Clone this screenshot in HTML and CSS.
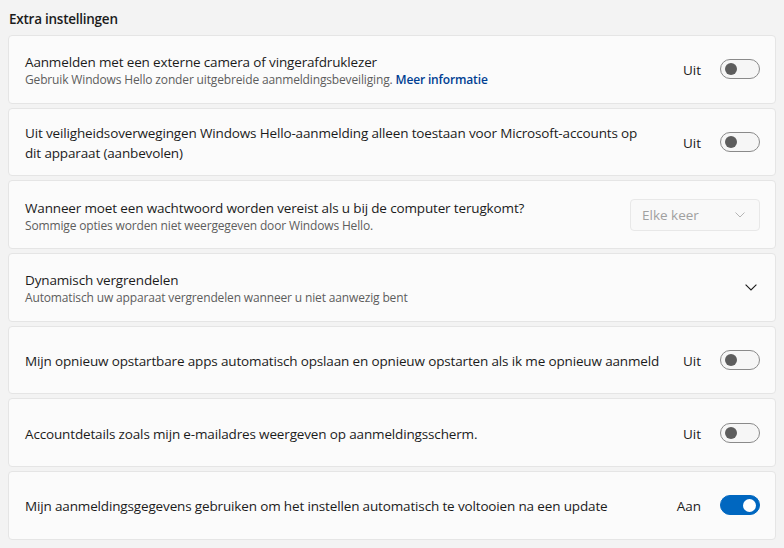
FILE: index.html
```html
<!DOCTYPE html>
<html lang="nl">
<head>
<meta charset="utf-8">
<link rel="stylesheet" href="styles.css">
</head>
<body>
<div class="page">
  <h2 class="section-title">Extra instellingen</h2>
  <div class="list">
    <div class="card">
      <div class="text">
        <div class="title">Aanmelden met een externe camera of vingerafdruklezer</div>
        <div class="sub">Gebruik Windows Hello zonder uitgebreide aanmeldingsbeveiliging. <a class="link">Meer informatie</a></div>
      </div>
      <div class="control"><span class="state">Uit</span><span class="toggle"><span class="knob"></span></span></div>
    </div>
    <div class="card">
      <div class="text">
        <div class="title">Uit veiligheidsoverwegingen Windows Hello-aanmelding alleen toestaan voor Microsoft-accounts op<br>dit apparaat (aanbevolen)</div>
      </div>
      <div class="control"><span class="state">Uit</span><span class="toggle"><span class="knob"></span></span></div>
    </div>
    <div class="card">
      <div class="text">
        <div class="title">Wanneer moet een wachtwoord worden vereist als u bij de computer terugkomt?</div>
        <div class="sub">Sommige opties worden niet weergegeven door Windows Hello.</div>
      </div>
      <div class="control">
        <div class="dropdown"><span>Elke keer</span>
          <svg class="chev-small" width="10" height="6" viewBox="0 0 10 6"><path d="M0.5 0.5 L5 5 L9.5 0.5" fill="none" stroke="#b5b5b5" stroke-width="1"/></svg>
        </div>
      </div>
    </div>
    <div class="card">
      <div class="text">
        <div class="title">Dynamisch vergrendelen</div>
        <div class="sub">Automatisch uw apparaat vergrendelen wanneer u niet aanwezig bent</div>
      </div>
      <div class="control">
        <svg class="chev" width="12" height="7" viewBox="0 0 12 7"><path d="M0.6 0.6 L6 6 L11.4 0.6" fill="none" stroke="#1b1b1b" stroke-width="1.1"/></svg>
      </div>
    </div>
    <div class="card">
      <div class="text">
        <div class="title">Mijn opnieuw opstartbare apps automatisch opslaan en opnieuw opstarten als ik me opnieuw aanmeld</div>
      </div>
      <div class="control"><span class="state">Uit</span><span class="toggle"><span class="knob"></span></span></div>
    </div>
    <div class="card">
      <div class="text">
        <div class="title">Accountdetails zoals mijn e-mailadres weergeven op aanmeldingsscherm.</div>
      </div>
      <div class="control"><span class="state">Uit</span><span class="toggle"><span class="knob"></span></span></div>
    </div>
    <div class="card">
      <div class="text">
        <div class="title">Mijn aanmeldingsgegevens gebruiken om het instellen automatisch te voltooien na een update</div>
      </div>
      <div class="control"><span class="state">Aan</span><span class="toggle on"><span class="knob"></span></span></div>
    </div>
  </div>
</div>
</body>
</html>
```
FILE: styles.css
```css
html, body {
  margin: 0;
  padding: 0;
  background: #f3f3f3;
}
body {
  font-family: "Open Sans", "Noto Sans", sans-serif;
  color: #1b1b1b;
  width: 784px;
  height: 548px;
  overflow: hidden;
}
.page {
  padding: 9px 8px 0 8px;
}
.section-title {
  margin: 0 0 6px 1px;
  font-size: 13.5px;
  font-weight: 600;
  line-height: 20px;
  letter-spacing: -0.25px;
}
.list {
  display: flex;
  flex-direction: column;
  gap: 4px;
}
.card {
  box-sizing: border-box;
  width: 768px;
  min-height: 68.67px;
  background: #fbfbfb;
  border: 1px solid #e5e5e5;
  border-radius: 4px;
  display: flex;
  align-items: center;
  padding: 0 15px 0 16px;
}
.text {
  flex: 1;
  min-width: 0;
  padding-top: 2px;
}
.title {
  font-size: 13.5px;
  line-height: 20px;
  letter-spacing: -0.15px;
}
.sub {
  font-size: 12px;
  line-height: 16px;
  color: #5d5d5d;
  letter-spacing: -0.15px;
}
.link {
  color: #003e92;
  font-weight: 600;
}
.control {
  display: flex;
  align-items: center;
}
.state {
  font-size: 13.5px;
  margin-right: 19px;
  padding-top: 2px;
}
.toggle {
  box-sizing: border-box;
  width: 40px;
  height: 20px;
  border: 1px solid #8a8a8a;
  border-radius: 10px;
  background: #f6f6f6;
  display: flex;
  align-items: center;
  padding: 0 4px;
}
.knob {
  width: 12px;
  height: 12px;
  border-radius: 50%;
  background: #5d5d5d;
}
.toggle.on {
  background: #0067c0;
  border-color: #0067c0;
  justify-content: flex-end;
  padding: 0 3px;
}
.toggle.on .knob {
  width: 13px;
  height: 13px;
  background: #ffffff;
}
.dropdown {
  box-sizing: border-box;
  width: 130px;
  height: 32px;
  border: 1px solid #e8e8e8;
  border-radius: 4px;
  background: #f9f9f9;
  display: flex;
  align-items: center;
  justify-content: space-between;
  padding: 0 14px 0 11px;
  font-size: 13.5px;
  color: #a0a0a0;
}
.chev {
  margin-right: 3px;
}
```
